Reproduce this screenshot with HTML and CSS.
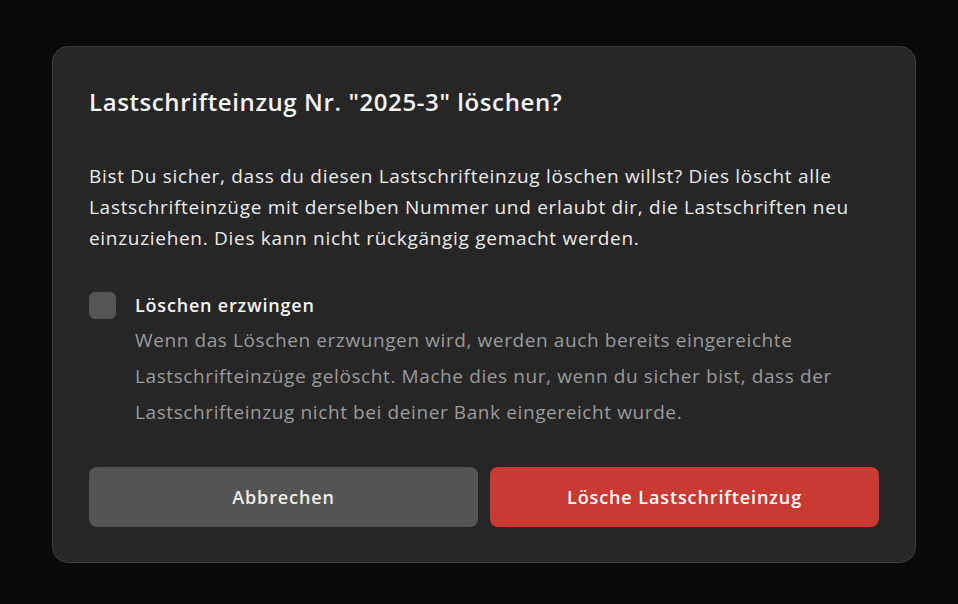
FILE: index.html
```html
<!DOCTYPE html>
<html lang="de">
<head>
    <meta charset="UTF-8">
    <meta name="viewport" content="width=device-width, initial-scale=1.0">
    <title>Lastschrifteinzug löschen</title>
    <link rel="stylesheet" href="styles.css">
</head>
<body>
  <div class="overlay">
    <div class="modal">
      <h2 class="modal-title">Lastschrifteinzug Nr. "2025-3" löschen?</h2>
      <p class="modal-text">Bist Du sicher, dass du diesen Lastschrifteinzug löschen willst? Dies löscht alle Lastschrifteinzüge mit derselben Nummer und erlaubt dir, die Lastschriften neu einzuziehen. Dies kann nicht rückgängig gemacht werden.</p>

      <label class="check-row">
        <span class="checkbox"></span>
        <span class="check-body">
          <span class="check-label">Löschen erzwingen</span>
          <span class="check-hint">Wenn das Löschen erzwungen wird, werden auch bereits eingereichte Lastschrifteinzüge gelöscht. Mache dies nur, wenn du sicher bist, dass der Lastschrifteinzug nicht bei deiner Bank eingereicht wurde.</span>
        </span>
      </label>

      <div class="actions">
        <button class="btn btn-cancel">Abbrechen</button>
        <button class="btn btn-danger">Lösche Lastschrifteinzug</button>
      </div>
    </div>
  </div>
</body>
</html>
```

FILE: styles.css
```css
body {
    font-family: "Open Sans", "Noto Sans", sans-serif;
    background-color: #0a0a0a;
    margin: 0;
    padding: 0;
    color: #f2f2f2;
}

.overlay {
    padding: 46px 0 0 52px;
}

.modal {
    box-sizing: border-box;
    width: 864px;
    background-color: #262626;
    border: 1px solid #3c3c3c;
    border-radius: 16px;
    padding: 37px 36px 35px 36px;
}

.modal-title {
    margin: 0;
    font-size: 24px;
    font-weight: 600;
    line-height: 36px;
    letter-spacing: 0.6px;
    color: #f5f5f5;
}

.modal-text {
    margin: 41px 0 0 0;
    font-size: 19px;
    line-height: 31px;
    letter-spacing: 0.7px;
    color: #ebebeb;
}

.check-row {
    display: flex;
    gap: 19px;
    margin-top: 38px;
}

.checkbox {
    flex: none;
    width: 27px;
    height: 27px;
    border-radius: 6px;
    background-color: #555555;
}

.check-body {
    display: flex;
    flex-direction: column;
    gap: 3px;
}

.check-label {
    font-size: 18px;
    font-weight: 600;
    line-height: 27px;
    letter-spacing: 0.8px;
    color: #f5f5f5;
}

.check-hint {
    font-size: 19px;
    line-height: 36px;
    letter-spacing: 0.6px;
    color: #9b9b9b;
}

.actions {
    display: flex;
    gap: 12px;
    margin-top: 37px;
}

.btn {
    flex: 1;
    height: 60px;
    border: none;
    border-radius: 8px;
    font-family: inherit;
    font-size: 18px;
    font-weight: 600;
    letter-spacing: 0.9px;
    cursor: pointer;
}

.btn-cancel {
    background-color: #545454;
    color: #ececec;
}

.btn-danger {
    background-color: #c93a33;
    color: #ffffff;
}
```
